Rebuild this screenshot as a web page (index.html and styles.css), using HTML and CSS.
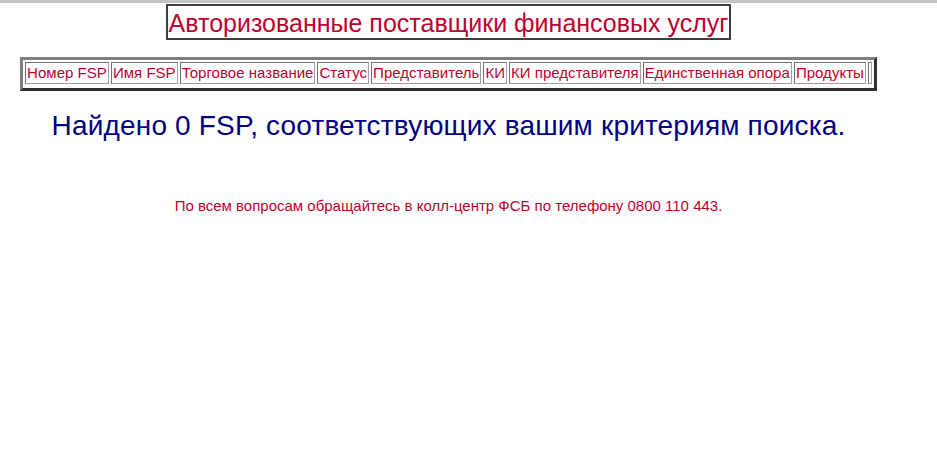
FILE: index.html
```html
<!DOCTYPE html>
<html lang="ru">
<head>
<meta charset="utf-8">
<title>Авторизованные поставщики финансовых услуг</title>
<link rel="stylesheet" href="styles.css">
</head>
<body>
<div class="topbar"></div>
<div class="page">
  <div class="title-row">
    <h1 class="title">Авторизованные поставщики финансовых услуг</h1>
  </div>
  <div class="table-row">
    <table class="results">
      <tr>
        <td>Номер FSP</td>
        <td>Имя FSP</td>
        <td>Торговое название</td>
        <td>Статус</td>
        <td>Представитель</td>
        <td>КИ</td>
        <td>КИ представителя</td>
        <td>Единственная опора</td>
        <td>Продукты</td>
        <td class="empty"></td>
      </tr>
    </table>
  </div>
  <h2 class="found">Найдено 0 FSP, соответствующих вашим критериям поиска.</h2>
  <p class="contact">По всем вопросам обращайтесь в колл-центр ФСБ по телефону 0800 110 443.</p>
</div>
</body>
</html>
```

FILE: styles.css
```css
html, body {
  margin: 0;
  padding: 0;
  background: #ffffff;
}

body {
  font-family: "Liberation Sans", Arial, sans-serif;
  color: #c0002f;
}

.topbar {
  height: 3px;
  background: #c4c4cb;
}

.page {
  width: 897px;
}

.title-row {
  display: flex;
  justify-content: center;
  padding-top: 1px;
}

.title {
  margin: 0;
  font-weight: normal;
  font-size: 25px;
  line-height: 28px;
  padding: 3px 1px 1px 1px;
  border: 2px solid #404040;
  color: #c0002f;
}

.table-row {
  display: flex;
  justify-content: center;
  margin-top: 17px;
}

.results {
  border-style: solid;
  border-width: 3px;
  border-color: #808080 #303030 #303030 #808080;
  border-spacing: 2px;
  padding: 0 0 2px 0;
  width: 855px;
  box-sizing: border-box;
}

.results td {
  font-size: 15px;
  line-height: 18px;
  padding: 1px;
  white-space: nowrap;
  letter-spacing: 0.03px;
  border: 1px solid;
  border-color: #707070 #a0a0a0 #a0a0a0 #707070;
  color: #c0002f;
}

.results td.empty {
  padding: 0 1px;
  width: 1px;
}

.found {
  margin: 19px 0 0 0;
  text-align: center;
  font-weight: normal;
  font-size: 28px;
  line-height: 32px;
  letter-spacing: 0.17px;
  color: #000080;
}

.contact {
  margin: 55px 0 0 0;
  text-align: center;
  font-size: 15px;
  line-height: 17px;
  color: #c0002f;
}
```
